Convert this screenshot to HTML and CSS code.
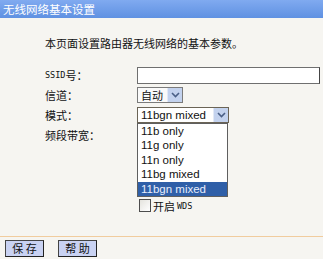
FILE: index.html
```html
<!DOCTYPE html>
<html lang="zh-CN">
<head>
    <meta charset="UTF-8">
    <title>无线网络基本设置</title>
    <link rel="stylesheet" href="styles.css">
</head>
<body>
    <div class="title-bar">无线网络基本设置</div>
    <p class="intro">本页面设置路由器无线网络的基本参数。</p>

    <div class="form">
        <div class="label"><span class="latin">SSID</span>号：</div>
        <div class="field"><div class="text-input"></div></div>

        <div class="label">信道：</div>
        <div class="field">
            <div class="select select-channel">
                <span class="value">自动</span>
                <span class="arrow"><svg width="9" height="6" viewBox="0 0 9 6"><path d="M1 1 L4.5 4.5 L8 1" fill="none" stroke="#4a5f86" stroke-width="1.6"/></svg></span>
            </div>
        </div>

        <div class="label">模式：</div>
        <div class="field">
            <div class="select select-mode">
                <span class="value">11bgn mixed</span>
                <span class="arrow"><svg width="9" height="6" viewBox="0 0 9 6"><path d="M1 1 L4.5 4.5 L8 1" fill="none" stroke="#4a5f86" stroke-width="1.6"/></svg></span>
                <!-- lista desplegada -->
                <ul class="dropdown">
                    <li>11b only</li>
                    <li>11g only</li>
                    <li>11n only</li>
                    <li>11bg mixed</li>
                    <li class="selected">11bgn mixed</li>
                </ul>
            </div>
        </div>

        <div class="label">频段带宽：</div>
        <div class="field">
            <div class="select select-band"></div>
        </div>

        <div class="label"></div>
        <div class="field"></div>

        <div class="label"></div>
        <div class="field check-row"><span class="checkbox"></span>开启<span class="latin">WDS</span></div>
    </div>

    <div class="buttons">
        <button class="btn">保 存</button>
        <button class="btn">帮 助</button>
    </div>
</body>
</html>
```

FILE: styles.css
```css
body {
    margin: 0;
    background-color: #f6f5f1;
    font-family: 'Noto Sans CJK SC', 'Liberation Sans', sans-serif;
    font-size: 11px;
    color: #111;
    width: 323px;
    height: 259px;
    overflow: hidden;
}

/* Barra de titulo */
.title-bar {
    height: 18px;
    line-height: 18px;
    padding-left: 3px;
    color: #fff;
    font-size: 11.5px;
    background: linear-gradient(180deg, #80aaf0, #5f91e2);
}

.intro {
    margin: 18px 0 0 45px;
    height: 14px;
    line-height: 14px;
}

.form {
    display: grid;
    grid-template-columns: 92px 1fr;
    grid-template-rows: 20px 20px 20px 20px 49px 23px;
    padding-left: 45px;
    margin-top: 15px;
}

.label {
    display: flex;
    align-items: center;
}

.latin {
    font-family: 'DejaVu Sans Mono', monospace;
    font-size: 8.5px;
}

.field {
    display: flex;
    align-items: center;
    position: relative;
}

.text-input {
    width: 183px;
    height: 17px;
    box-sizing: border-box;
    border: 1px solid #6f6f6f;
    border-right-color: #444;
    background-color: #fff;
}

/* Selects dibujados a mano */
.select {
    position: relative;
    display: flex;
    align-items: center;
    box-sizing: border-box;
    height: 16px;
    border: 1px solid #7b7b7b;
    background-color: #fff;
}

.select .value {
    flex: 1;
    padding-left: 3px;
    white-space: nowrap;
}

.select .arrow {
    width: 14px;
    height: 14px;
    display: flex;
    align-items: center;
    justify-content: center;
    background-color: #c3d2ee;
    border-left: 1px solid #e2e9f6;
}

.select-channel {
    width: 46px;
    background-color: #fafafa;
}

.select-mode {
    width: 92px;
    border-color: #6b6456;
}

.select-mode .value {
    font-family: 'Liberation Sans', sans-serif;
    font-size: 11.5px;
}

.select-band {
    width: 60px;
}

.dropdown {
    position: absolute;
    top: 15px;
    left: -1px;
    width: 91px;
    margin: 0;
    padding: 0;
    list-style: none;
    box-sizing: border-box;
    border: 1px solid #5f5f5f;
    background-color: #fff;
    font-family: 'Liberation Sans', sans-serif;
    font-size: 11.5px;
    z-index: 2;
}

.dropdown li {
    height: 14.4px;
    line-height: 14px;
    padding-left: 3px;
}

.dropdown li.selected {
    background-color: #2f5fa8;
    color: #e8eefc;
}

.check-row {
    gap: 2px;
    padding-left: 2px;
}

.checkbox {
    width: 12px;
    height: 13px;
    box-sizing: border-box;
    border: 1px solid #4d4d4d;
    background: linear-gradient(135deg, #e4e3dd, #fff);
}

/* Botones */
.buttons {
    margin-top: 19px;
    border-top: 1px solid #f1cc9e;
    padding: 3px 0 0 5px;
    display: flex;
    gap: 14px;
}

.btn {
    width: 39px;
    height: 17px;
    padding: 0;
    font-family: 'Noto Sans CJK SC', sans-serif;
    font-size: 11px;
    line-height: 15px;
    color: #111;
    background-color: #c9d2f2;
    border: 1px solid;
    border-color: #444 #222 #222 #444;
}
```
